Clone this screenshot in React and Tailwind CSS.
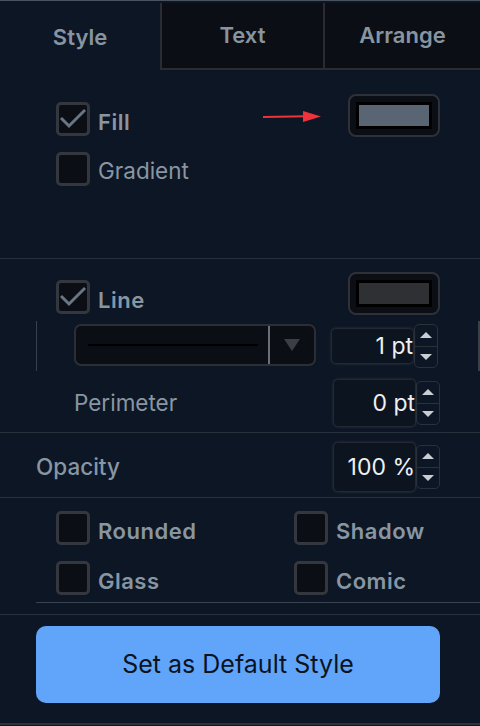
import React from "react";

const font = { fontFamily: "Inter, 'Noto Sans', sans-serif" };

// small checkbox used throughout the panel
const Check = ({ checked }) => (
  <div className="h-[34px] w-[34px] shrink-0 rounded-[5px] border-[3px] border-[#34373e] bg-[#0b0e15] grid place-items-center">
    {checked && (
      <svg width="26" height="22" viewBox="0 0 26 22" fill="none">
        <path d="M2 11 L9 18 L24 3" stroke="#6b7684" strokeWidth="3" strokeLinecap="square" />
      </svg>
    )}
  </div>
);

const CheckRow = ({ checked, label, bold }) => (
  <div className="flex h-[34px] items-center gap-[8px]">
    <Check checked={checked} />
    <span
      className={`leading-none pt-[5px] text-[#8896a3] ${bold ? "text-[22px] font-semibold tracking-[0.5px]" : "text-[22.5px] font-normal"}`}
    >
      {label}
    </span>
  </div>
);

const Swatch = ({ color }) => (
  <div className="h-[43px] w-[92px] rounded-[8px] border-2 border-[#2e3137] bg-[#0b0e14] p-[6px]">
    <div className="h-full w-full border-[3px] border-black" style={{ background: color }} />
  </div>
);

const Stepper = () => (
  <div className="flex h-[44px] w-[24px] flex-col rounded-[5px] border border-[#2b313b]">
    <div className="flex flex-1 items-center justify-center border-b border-[#2b313b]">
      <svg width="14" height="8" viewBox="0 0 14 8"><path d="M1 7 L7 1 L13 7 Z" fill="#c9ced4" /></svg>
    </div>
    <div className="flex flex-1 items-center justify-center">
      <svg width="14" height="8" viewBox="0 0 14 8"><path d="M1 1 L7 7 L13 1 Z" fill="#c9ced4" /></svg>
    </div>
  </div>
);

const NumInput = ({ value, h }) => (
  <div className="flex items-center">
    <div
      className={`flex w-[83px] items-center justify-end rounded-[5px] border border-[#232833] bg-[#0c1420] shadow-[0_0_3px_rgba(255,255,255,0.12)] text-[23px] text-[#eef0f2] ${h}`}
    >
      {value}
    </div>
    <Stepper />
  </div>
);

export default function App() {
  return (
    <div className="h-[726px] w-[480px] overflow-hidden bg-[#0d1624] border-t border-[#4a5260]" style={font}>
      {/* Tabs */}
      <div className="flex h-[69px]">
        <div className="flex w-[160px] items-center justify-center text-[22px] font-semibold text-[#8795a2] pt-[4px]">Style</div>
        <div className="mt-[2px] flex w-[163px] items-center justify-center border-l-2 border-b-2 border-[#2a2c31] bg-[#0b0e14] text-[22px] font-semibold text-[#8795a2]">Text</div>
        <div className="mt-[2px] flex flex-1 items-center justify-center border-l-2 border-b-2 border-[#2a2c31] bg-[#0b0e14] text-[22px] font-semibold text-[#8795a2]">Arrange</div>
      </div>

      {/* Fill */}
      <div className="h-[189px] border-b border-[#29313d] pt-[24px] pl-[56px] pr-[40px]">
        <div className="flex items-start">
          <div className="mt-[8px] flex flex-col gap-[16px]">
            <CheckRow checked label="Fill" bold />
            <CheckRow label="Gradient" />
          </div>
          <svg className="ml-auto mt-[17px] mr-[27px]" width="58" height="12" viewBox="0 0 58 12">
            <path d="M0 6 L44 5.2" stroke="#f0323c" strokeWidth="2" />
            <path d="M40 0 L58 5.5 L40 11 Z" fill="#f0323c" />
          </svg>
          <Swatch color="#5a6573" />
        </div>
      </div>

      {/* Line */}
      <div className="h-[174px] border-b border-[#29313d] pt-[13px]">
        <div className="flex items-start pl-[56px] pr-[40px]">
          <div className="mt-[8px]">
            <CheckRow checked label="Line" bold />
          </div>
          <div className="ml-auto">
            <Swatch color="#2f3033" />
          </div>
        </div>
        <div className="mt-[9px] flex items-start">
          <div className="ml-[36px] mt-[-3px] h-[50px] w-px bg-[#3a404a]" />
          <div className="ml-[37px] flex h-[42px] w-[242px] items-center rounded-[7px] border-2 border-[#2b2e35] bg-[#0b0e14]">
            <div className="ml-[12px] h-[1.5px] w-[170px] bg-black" />
            <div className="ml-[10px] h-full w-[2px] bg-[#6b7078]" />
            <div className="flex flex-1 items-center justify-center">
              <svg width="16" height="14" viewBox="0 0 16 14"><path d="M0 1 L16 1 L8 13 Z" fill="#3b3e44" /></svg>
            </div>
          </div>
          <div className="ml-[15px]">
            <NumInput value="1 pt" h="h-[36px]" />
          </div>
          <div className="ml-auto mt-[-3px] h-[50px] w-[2px] bg-[#3a404a]" />
        </div>
        <div className="mt-[8px] flex items-center pl-[74px] pr-[40px]">
          <span className="text-[22.5px] text-[#8896a3]">Perimeter</span>
          <div className="ml-auto">
            <NumInput value="0 pt" h="h-[48px]" />
          </div>
        </div>
      </div>

      {/* Opacity */}
      <div className="flex h-[65px] items-center border-b border-[#29313d] pl-[36px] pr-[40px] pt-[4px]">
        <span className="text-[22.5px] font-medium text-[#8896a3]">Opacity</span>
        <div className="ml-auto">
          <NumInput value="100 %" h="h-[50px]" />
        </div>
      </div>

      {/* Options */}
      <div className="pt-[13px]">
        <div className="grid grid-cols-[238px_1fr] gap-y-[16px] pl-[56px]">
          <CheckRow label="Rounded" bold />
          <CheckRow label="Shadow" bold />
          <CheckRow label="Glass" bold />
          <CheckRow label="Comic" bold />
        </div>
        <div className="mt-[7px] ml-[36px] h-px bg-[#3a4250]" />
        <div className="mt-[11px] h-px bg-[#29313d]" />
      </div>

      {/* Button */}
      <div className="pl-[36px] pt-[11px]">
        <button className="flex h-[77px] w-[404px] items-center justify-center rounded-[10px] bg-[#60a5fa] text-[25px] text-[#0b1320]">
          Set as Default Style
        </button>
      </div>
      <div className="mt-[20px] h-[2px] bg-[#2e343d]" />
    </div>
  );
}
